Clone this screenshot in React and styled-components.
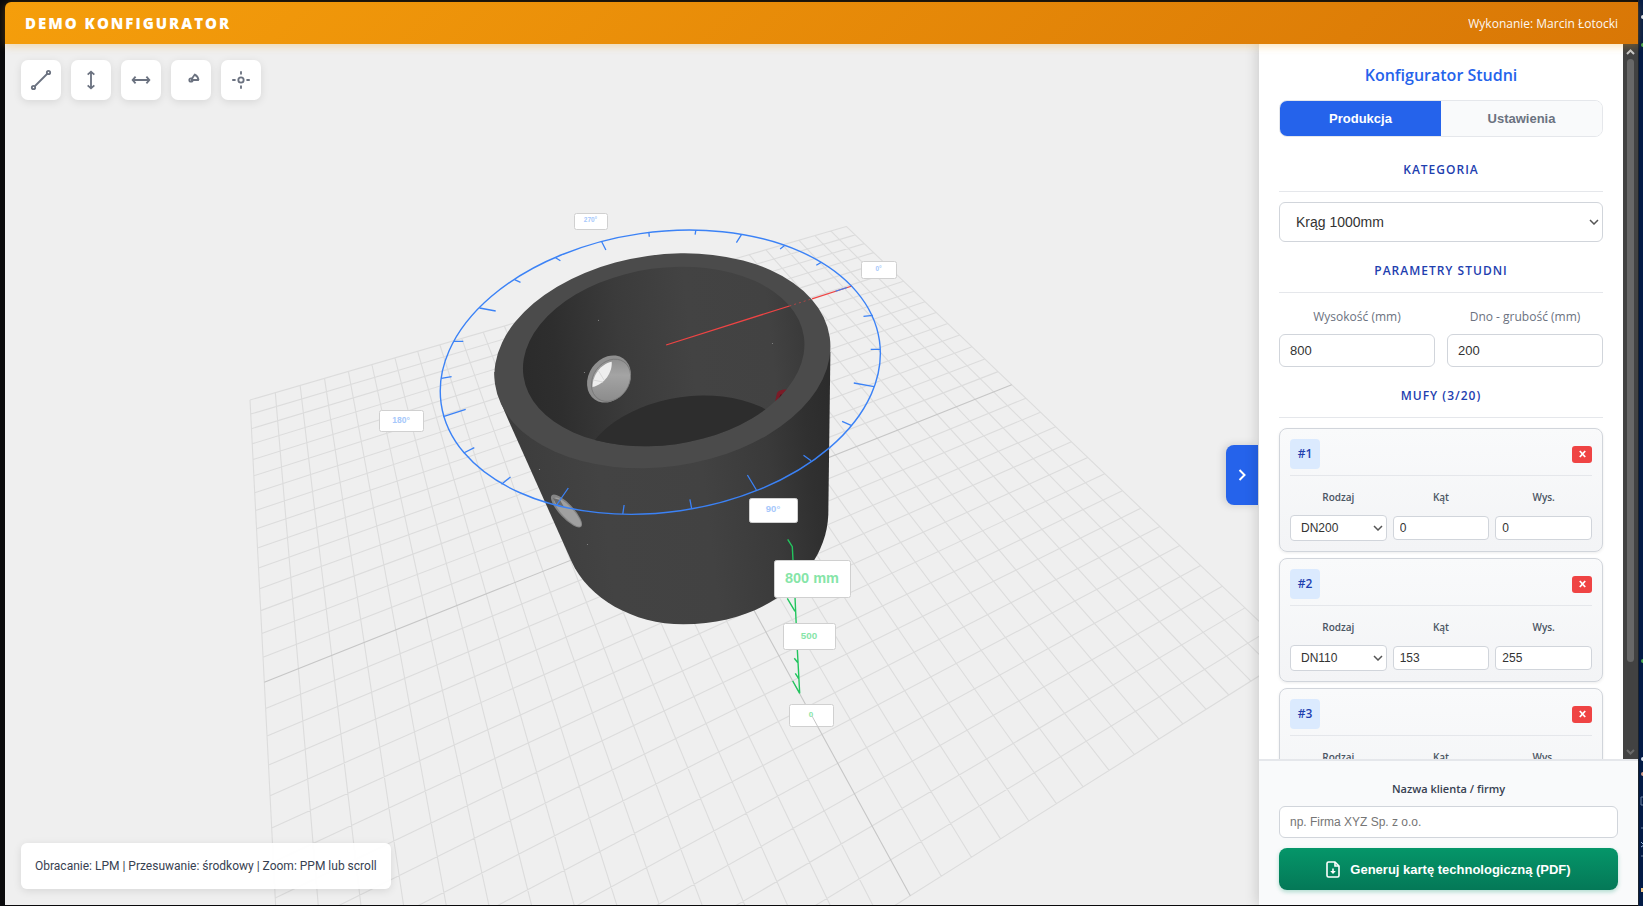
import { useState } from "react";
import styled, { createGlobalStyle, css } from "styled-components";

const GRID_HALF = 15;

// ground plane (grid units) -> screen
const project = (u, v) => {
  const w = 1 + 0.010823 * u - 0.020158 * v;
  return [
    (31.818 * u - 4.241 * v + 698.67) / w,
    (-4.146 * u + 7.702 * v + 509.34) / w,
  ];
};

const segment = (a, b) => `M${a.join(" ")}L${b.join(" ")}`;

const gridLines = [];
for (let i = -GRID_HALF; i <= GRID_HALF; i++) {
  if (i === 0) continue;
  gridLines.push(segment(project(i, -GRID_HALF), project(i, GRID_HALF)));
  gridLines.push(segment(project(-GRID_HALF, i), project(GRID_HALF, i)));
}

const axisLines = [
  segment(project(0, -GRID_HALF), project(0, GRID_HALF)),
  segment(project(-GRID_HALF, 0), project(GRID_HALF, 0)),
];

const ringTicks = [
  [872.8, 315.3, 863.5, 316.3],
  [880.3, 349.3, 870.7, 349.3],
  [874.1, 386.7, 853.8, 383],
  [851.1, 425.3, 842.1, 421.3],
  [811.1, 460.7, 803.5, 455.3],
  [756.4, 490, 747.4, 475],
  [691.6, 508.3, 689.9, 499.3],
  [622.8, 514, 624.1, 505],
  [556.6, 505, 568.3, 488],
  [501.5, 484.3, 510.5, 477],
  [463.7, 453, 474.3, 447.7],
  [443.3, 416.7, 465.7, 409.3],
  [441.3, 378.3, 451.6, 376.7],
  [454, 341.3, 463.3, 341.3],
  [479.5, 308, 495.7, 311],
  [514.6, 279.7, 520.5, 282.3],
  [555.6, 257.7, 560.4, 260.7],
  [601.7, 241.7, 605.9, 250],
  [648.9, 232.7, 649.3, 236.7],
  [695.8, 230.3, 695.1, 234.7],
  [741.6, 234.3, 736.4, 242.7],
  [784.3, 245.7, 780.1, 249],
  [821.4, 262.3, 816.3, 265.3],
];

const angleTags = [
  { text: "270°", x: 574, y: 213, w: 33, h: 16, size: 6.5 },
  { text: "0°", x: 861, y: 261, w: 35, h: 17, size: 6.5 },
  { text: "180°", x: 379, y: 410, w: 44, h: 21, size: 8.5 },
  { text: "90°", x: 749, y: 498, w: 48, h: 24, size: 9.5 },
];

const heightTags = [
  { text: "800 mm", x: 774, y: 560, w: 76, h: 37, size: 14.5 },
  { text: "500", x: 783, y: 623, w: 52, h: 26, size: 9.8 },
  { text: "0", x: 789, y: 704, w: 44, h: 22, size: 8 },
];

const Tag = ({ text, x, y, w, h, size, color }) => (
  <g>
    <rect x={x + 0.5} y={y + 0.5} width={w} height={h} rx="2" fill="#fff" stroke="#d0d0d0" />
    <text
      x={x + w / 2}
      y={y + h / 2 - 1 + size * 0.36}
      fontSize={size}
      fontWeight="700"
      textAnchor="middle"
      fill={color}
    >
      {text}
    </text>
  </g>
);

const Scene = () => (
  <Canvas viewBox="5 44 1254 861" preserveAspectRatio="xMidYMid slice">
    <defs>
      <linearGradient id="wall" gradientUnits="userSpaceOnUse" x1="494" y1="440" x2="830" y2="400">
        <stop offset="0" stopColor="#3b3b3b" />
        <stop offset="0.3" stopColor="#434343" />
        <stop offset="0.6" stopColor="#424242" />
        <stop offset="0.8" stopColor="#3a3a3a" />
        <stop offset="0.92" stopColor="#303030" />
        <stop offset="1" stopColor="#2c2c2c" />
      </linearGradient>
      <linearGradient id="inside" gradientUnits="userSpaceOnUse" x1="523" y1="370" x2="805" y2="340">
        <stop offset="0" stopColor="#2b2b2b" />
        <stop offset="0.12" stopColor="#2e2e2e" />
        <stop offset="0.35" stopColor="#3b3b3b" />
        <stop offset="0.6" stopColor="#434343" />
        <stop offset="0.88" stopColor="#424242" />
        <stop offset="1" stopColor="#3a3a3a" />
      </linearGradient>
      <linearGradient id="bore" gradientUnits="userSpaceOnUse" x1="594" y1="392" x2="630" y2="368">
        <stop offset="0" stopColor="#8c8c8c" />
        <stop offset="0.6" stopColor="#a4a4a4" />
        <stop offset="1" stopColor="#8e8e8e" />
      </linearGradient>
      <clipPath id="opening">
        <ellipse cx="663.7" cy="356.5" rx="141.6" ry="88.5" transform="rotate(-8 663.7 356.5)" />
      </clipPath>
    </defs>

    <path d={gridLines.join("")} stroke="#dcdcdc" strokeWidth="1.1" fill="none" />
    <path d={axisLines.join("")} stroke="#c6c6c6" strokeWidth="1.1" fill="none" />

    <path
      d="M494.3 372C495 388 500 401 508.3 420L571.7 561.7C588 598 633 624.3 683.3 624.3C768 624.3 826 572 828.3 515L830.4 352Z"
      fill="url(#wall)"
    />
    <ellipse cx="662.4" cy="360.8" rx="169" ry="105.9" transform="rotate(-8 662.4 360.8)" fill="#4b4b4b" />
    <g clipPath="url(#opening)">
      <rect x="520" y="260" width="290" height="200" fill="url(#inside)" />
      <ellipse cx="690" cy="465" rx="109" ry="68.5" transform="rotate(-8 690 465)" fill="#2d2d2d" />
      <path d="M775 402L777 393Q779 389 787 389.5L784 394L782 402Z" fill="#7c1b27" />
      <path d="M778 400L781 394L783 397Z" fill="#3d1016" />
    </g>
    <g>
      <ellipse cx="609" cy="379" rx="25" ry="20.3" transform="rotate(-55 609 379)" fill="#8f8f8f" />
      <ellipse
        cx="611"
        cy="380.3"
        rx="22.5"
        ry="18"
        transform="rotate(-55 611 380.3)"
        fill="url(#bore)"
        stroke="#777"
        strokeWidth="0.8"
      />
      <path d="M592.5 387C592.5 376 600 364 611.7 361.7C612.5 372 605 384 592.5 387Z" fill="#eeeeee" />
      <path d="M593 380L603 382M598 370L604 380" stroke="#dadada" fill="none" />
    </g>
    <ellipse cx="566.5" cy="511" rx="21.5" ry="7" transform="rotate(47 566.5 511)" fill="#858585" />
    <ellipse cx="567.5" cy="512" rx="19" ry="5.5" transform="rotate(47 567.5 512)" fill="#a0a0a0" />
    <path d="M553 498L560 500L564 507L556 504Z" fill="#6a6a6a" />
    <g fill="#8a8a8a">
      <circle cx="598.5" cy="320.3" r="0.6" />
      <circle cx="584.5" cy="372.5" r="0.6" />
      <circle cx="772.5" cy="343.5" r="0.6" />
      <circle cx="539.5" cy="469.5" r="0.6" />
      <circle cx="587.5" cy="544.5" r="0.6" />
    </g>

    <path d="M666.1 345L789.4 306M812 298.8L852 286" stroke="#ef4444" strokeWidth="1.3" />
    <path d="M789.4 306L812 298.8" stroke="#ef4444" strokeDasharray="2 3" opacity="0.6" />
    <path d="M835.5 291.2L847 287.5" stroke="#3b82f6" strokeWidth="1.2" />
    <ellipse
      cx="660.3"
      cy="372.2"
      rx="221.4"
      ry="140"
      transform="rotate(-8.2 660.3 372.2)"
      fill="none"
      stroke="#3b82f6"
      strokeWidth="1.4"
    />
    <path
      d={ringTicks.map(([x1, y1, x2, y2]) => `M${x1} ${y1}L${x2} ${y2}`).join("")}
      stroke="#3b82f6"
      strokeWidth="1.3"
    />

    <path
      d="M787.7 539.3L792.3 546.7L793 560L795 597L797.3 649L799.7 693.3L792.7 681M787.3 598.3L795 611.3M794.3 658.3L798.3 663.3M795.3 673.3L799 679"
      stroke="#22c55e"
      strokeWidth="1.4"
      fill="none"
    />
    {angleTags.map((tag) => (
      <Tag key={tag.text} {...tag} color="#a6c8fb" />
    ))}
    {heightTags.map((tag) => (
      <Tag key={tag.text} {...tag} color="#86e5a8" />
    ))}
    <path d="M812 716L818 727" stroke="#c6c6c6" />
  </Canvas>
);

const tools = [
  {
    name: "Odległość",
    icon: (
      <>
        <circle cx="3" cy="21" r="2" />
        <circle cx="21" cy="3" r="2" />
        <path d="M4.5 19.5L19.5 4.5" />
      </>
    ),
  },
  { name: "Wymiar pionowy", icon: <path d="M12 2v20M8 5.5L12 2l4 3.5M8 18.5l4 3.5 4-3.5" /> },
  { name: "Wymiar poziomy", icon: <path d="M2 12h20M5.5 8L2 12l3.5 4M18.5 8l3.5 4-3.5 4" /> },
  {
    name: "Kąt",
    icon: (
      <>
        <circle cx="12" cy="12" r="2" />
        <path d="M12 12h9.5M13 10.5L16.5 5.5A8 8 0 0 1 21 12" />
      </>
    ),
  },
  {
    name: "Środek",
    icon: (
      <>
        <circle cx="12" cy="12" r="3.2" />
        <path d="M12 1.5v4M12 18.5v4M1.5 12h4M18.5 12h4" />
      </>
    ),
  },
];

const initialSleeves = [
  { type: "DN200", angle: 0, height: 0 },
  { type: "DN110", angle: 153, height: 255 },
  { type: "DN160", angle: 270, height: 300 },
];

function App() {
  const [tab, setTab] = useState("Produkcja");
  const [sleeves, setSleeves] = useState(initialSleeves);

  const removeSleeve = (index) => {
    setSleeves(sleeves.filter((_, i) => i !== index));
  };

  return (
    <Desktop>
      <GlobalStyle />
      <Window>
        <Header>
          <Brand>DEMO KONFIGURATOR</Brand>
          <Author>Wykonanie: Marcin Łotocki</Author>
        </Header>
        <Main>
          <Viewport>
            <Scene />
            <Toolbar>
              {tools.map((tool) => (
                <ToolButton key={tool.name} type="button" aria-label={tool.name}>
                  <svg
                    width="20"
                    height="20"
                    viewBox="0 0 24 24"
                    fill="none"
                    stroke="currentColor"
                    strokeWidth="2.2"
                    overflow="visible"
                  >
                    {tool.icon}
                  </svg>
                </ToolButton>
              ))}
            </Toolbar>
            <Hint>Obracanie: LPM | Przesuwanie: środkowy | Zoom: PPM lub scroll</Hint>
            <PanelToggle type="button" aria-label="Zwiń panel">
              <svg width="8" height="12" viewBox="0 0 8 12" fill="none" stroke="currentColor" strokeWidth="2">
                <path d="M1.5 1L6.5 6L1.5 11" />
              </svg>
            </PanelToggle>
          </Viewport>

          <Sidebar>
            <ScrollArea>
              <Content>
                <Title>Konfigurator Studni</Title>
                <Tabs>
                  {["Produkcja", "Ustawienia"].map((name) => (
                    <Tab key={name} type="button" $active={tab === name} onClick={() => setTab(name)}>
                      {name}
                    </Tab>
                  ))}
                </Tabs>

                <SectionTitle id="category">Kategoria</SectionTitle>
                <CategorySelect aria-labelledby="category" defaultValue="Krąg 1000mm">
                  <option>Krąg 1000mm</option>
                  <option>Krąg 1200mm</option>
                  <option>Krąg 1500mm</option>
                </CategorySelect>

                <SectionTitle>Parametry studni</SectionTitle>
                <Params>
                  <Field>
                    <FieldLabel htmlFor="height">Wysokość (mm)</FieldLabel>
                    <TextInput id="height" defaultValue="800" />
                  </Field>
                  <Field>
                    <FieldLabel htmlFor="bottom">Dno - grubość (mm)</FieldLabel>
                    <TextInput id="bottom" defaultValue="200" />
                  </Field>
                </Params>

                <SectionTitle>Mufy ({sleeves.length}/20)</SectionTitle>
                <Cards>
                  {sleeves.map((sleeve, i) => (
                    <Card key={sleeve.type}>
                      <CardHead>
                        <Badge>#{i + 1}</Badge>
                        <RemoveButton type="button" aria-label="Usuń mufę" onClick={() => removeSleeve(i)}>
                          <svg width="7" height="8" viewBox="0 0 7 8" stroke="currentColor" strokeWidth="1.8">
                            <path d="M0.8 1L6.2 7M6.2 1L0.8 7" />
                          </svg>
                        </RemoveButton>
                      </CardHead>
                      <CardGrid>
                        <CardLabel htmlFor={`type-${i}`}>Rodzaj</CardLabel>
                        <CardLabel htmlFor={`angle-${i}`}>Kąt</CardLabel>
                        <CardLabel htmlFor={`level-${i}`}>Wys.</CardLabel>
                        <CardSelect id={`type-${i}`} defaultValue={sleeve.type}>
                          <option>DN110</option>
                          <option>DN160</option>
                          <option>DN200</option>
                        </CardSelect>
                        <CardInput id={`angle-${i}`} defaultValue={sleeve.angle} />
                        <CardInput id={`level-${i}`} defaultValue={sleeve.height} />
                      </CardGrid>
                    </Card>
                  ))}
                </Cards>
              </Content>
              <ScrollTrack>
                <ScrollArrow>
                  <svg width="9" height="6" viewBox="0 0 9 6" fill="none" stroke="#c8c8c8" strokeWidth="2">
                    <path d="M1 5L4.5 1.5L8 5" />
                  </svg>
                </ScrollArrow>
                <ScrollRail>
                  <ScrollThumb />
                </ScrollRail>
                <ScrollArrow>
                  <svg width="9" height="6" viewBox="0 0 9 6" fill="none" stroke="#6b6b6b" strokeWidth="2">
                    <path d="M1 1L4.5 4.5L8 1" />
                  </svg>
                </ScrollArrow>
              </ScrollTrack>
            </ScrollArea>

            <Footer>
              <ClientLabel htmlFor="client">Nazwa klienta / firmy</ClientLabel>
              <ClientInput id="client" placeholder="np. Firma XYZ Sp. z o.o." />
              <GenerateButton type="button">
                <svg width="14" height="17" viewBox="0 0 14 17" fill="none" stroke="currentColor" strokeWidth="1.6">
                  <path d="M9 1H2.5Q1 1 1 2.5V14.5Q1 16 2.5 16H11.5Q13 16 13 14.5V5Z" strokeLinejoin="round" />
                  <path d="M9 1V5H13" />
                  <path d="M7 7.5V11" />
                  <path d="M4.2 10H9.8L7 13Z" fill="currentColor" stroke="none" />
                </svg>
                Generuj kartę technologiczną (PDF)
              </GenerateButton>
            </Footer>
          </Sidebar>
        </Main>
      </Window>
      <Backdrop>
        <svg width="5" height="906" viewBox="0 0 5 906" aria-hidden="true">
          <circle cx="4" cy="17" r="2" fill="#dfe6f2" />
          <circle cx="4" cy="45" r="2" fill="#4caf50" />
          <circle cx="4" cy="661" r="2" fill="#4caf50" />
          <circle cx="4" cy="759" r="2" fill="#dfe6f2" />
          <circle cx="4" cy="774" r="2" fill="#d9a08c" />
          <path d="M5 797H2V805H5M2 828H5M2 856H5" stroke="#6f86a8" fill="none" />
          <path d="M2 842L5 845L2 847" stroke="#9fc0e8" fill="none" />
          <rect x="2" y="888" width="3" height="4" fill="#f3c98b" />
        </svg>
      </Backdrop>
    </Desktop>
  );
}

export default App;

const GlobalStyle = createGlobalStyle`
  * {
    box-sizing: border-box;
  }
  body {
    margin: 0;
    background: #0a0a0c;
    color: #374151;
    font-family: "Open Sans", "Noto Sans", sans-serif;
  }
  button,
  input,
  select {
    font-family: "Liberation Sans", Arial, sans-serif;
    margin: 0;
  }
`;

const Desktop = styled.div`
  display: flex;
  height: 100vh;
`;

const Window = styled.div`
  flex: 1;
  min-width: 0;
  display: flex;
  flex-direction: column;
  padding: 2px 0 1px 5px;
`;

const Backdrop = styled.div`
  width: 5px;
  overflow: hidden;
  background: #041c48;
  border-left: 1px solid #1c2430;
`;

const Header = styled.header`
  display: flex;
  align-items: center;
  justify-content: space-between;
  height: 42px;
  padding: 0 20px;
  color: #fff;
  background: linear-gradient(135deg, #f59e0b, #d97706);
  border-top-left-radius: 6px;
  box-shadow: 0 2px 8px rgba(245, 158, 11, 0.3);
  position: relative;
  z-index: 5;
`;

const Brand = styled.h1`
  margin: 0;
  font-size: 15px;
  font-weight: 800;
  letter-spacing: 2px;
`;

const Author = styled.span`
  font-size: 12px;
  font-weight: 500;
  opacity: 0.95;
`;

const Main = styled.main`
  flex: 1;
  min-height: 0;
  display: flex;
`;

const Viewport = styled.section`
  position: relative;
  flex: 1;
  min-width: 0;
  display: flex;
  flex-direction: column;
  align-items: flex-start;
  justify-content: space-between;
  padding: 16px;
  background: #efefef;
`;

const Canvas = styled.svg`
  position: absolute;
  inset: 0;
  width: 100%;
  height: 100%;
  font-family: "Liberation Sans", Arial, sans-serif;
`;

const Toolbar = styled.div`
  position: relative;
  display: flex;
  gap: 10px;
`;

const ToolButton = styled.button`
  display: flex;
  align-items: center;
  justify-content: center;
  width: 40px;
  height: 40px;
  padding: 0;
  color: #6b7280;
  background: #fff;
  border: 0;
  border-radius: 7px;
  box-shadow: 0 2px 8px rgba(0, 0, 0, 0.1);
`;

const Hint = styled.div`
  position: relative;
  padding: 14px;
  font-family: Roboto, "Open Sans", sans-serif;
  font-size: 12px;
  line-height: 18px;
  color: #374151;
  background: rgba(255, 255, 255, 0.95);
  border-radius: 6px;
  box-shadow: 0 2px 8px rgba(0, 0, 0, 0.1);
`;

const PanelToggle = styled.button`
  position: absolute;
  top: calc(50% - 30px);
  right: 1px;
  display: flex;
  align-items: center;
  justify-content: center;
  width: 32px;
  height: 60px;
  padding: 0;
  color: #fff;
  background: #2563eb;
  border: 0;
  border-radius: 8px 0 0 8px;
  box-shadow: -2px 0 8px rgba(0, 0, 0, 0.15);
`;

const Sidebar = styled.aside`
  width: 379px;
  display: flex;
  flex-direction: column;
  background: #fff;
  box-shadow: -2px 0 12px rgba(0, 0, 0, 0.15);
  position: relative;
`;

const ScrollArea = styled.div`
  flex: 1;
  min-height: 0;
  display: flex;
`;

const Content = styled.div`
  flex: 1;
  overflow: hidden;
  padding: 20px;
`;

const ScrollTrack = styled.div`
  width: 15px;
  display: flex;
  flex-direction: column;
  background: #424242;
`;

const ScrollArrow = styled.div`
  display: flex;
  align-items: center;
  justify-content: center;
  height: 15px;
`;

const ScrollRail = styled.div`
  flex: 1;
  padding: 0 4px;
`;

const ScrollThumb = styled.div`
  height: 88%;
  background: #686868;
  border-radius: 4px;
`;

const Title = styled.h2`
  margin: 0 0 14px;
  font-size: 16px;
  font-weight: 600;
  line-height: 22px;
  text-align: center;
  color: #2563eb;
`;

const Tabs = styled.div`
  display: flex;
  height: 37px;
  margin-bottom: 24px;
  overflow: hidden;
  border: 1px solid #e5e7eb;
  border-radius: 8px;
`;

const Tab = styled.button`
  flex: 1;
  border: 0;
  font-size: 13px;
  font-weight: 700;
  color: #6b7280;
  background: #f9fafb;
  ${(props) =>
    props.$active &&
    css`
      color: #fff;
      background: #2563eb;
    `}
`;

const SectionTitle = styled.h3`
  margin: 20px 0 10px;
  padding-bottom: 12px;
  font-size: 12px;
  font-weight: 600;
  line-height: 18px;
  letter-spacing: 1px;
  text-align: center;
  text-transform: uppercase;
  color: #1e40af;
  border-bottom: 1px solid #e5e7eb;
`;

const control = css`
  width: 100%;
  min-width: 0;
  color: #333;
  background-color: #fff;
  border: 1px solid #d1d5db;
`;

const chevron = css`
  appearance: none;
  background-image: url("data:image/svg+xml,%3Csvg xmlns='http://www.w3.org/2000/svg' width='10' height='6' viewBox='0 0 10 6' fill='none' stroke='%23555' stroke-width='1.5'%3E%3Cpath d='M1 1l4 4 4-4'/%3E%3C/svg%3E");
  background-repeat: no-repeat;
  background-position: right 3px center;
`;

const CategorySelect = styled.select`
  ${control}
  ${chevron}
  height: 40px;
  padding: 0 16px;
  font-size: 14px;
  border-radius: 6px;
`;

const Params = styled.div`
  display: grid;
  grid-template-columns: 1fr 1fr;
  gap: 12px;
`;

const Field = styled.div`
  display: flex;
  flex-direction: column;
`;

const FieldLabel = styled.label`
  padding: 5px 0 8px;
  font-size: 12px;
  line-height: 18px;
  text-align: center;
  color: #6b7280;
`;

const TextInput = styled.input`
  ${control}
  height: 33px;
  padding: 0 10px;
  font-size: 13px;
  border-radius: 6px;
`;

const Cards = styled.div`
  display: flex;
  flex-direction: column;
  gap: 6px;
`;

const Card = styled.div`
  padding: 10px;
  background: linear-gradient(180deg, #f9fafb, #f3f4f6);
  border: 1px solid #d1d5db;
  border-radius: 8px;
  box-shadow: 0 1px 3px rgba(0, 0, 0, 0.08);
`;

const CardHead = styled.div`
  display: flex;
  align-items: center;
  justify-content: space-between;
  padding-bottom: 6px;
  border-bottom: 1px solid #e5e7eb;
`;

const Badge = styled.span`
  width: 30px;
  font-size: 12px;
  font-weight: 600;
  line-height: 30px;
  text-align: center;
  color: #1e40af;
  background: #dbeafe;
  border-radius: 4px;
`;

const RemoveButton = styled.button`
  display: flex;
  align-items: center;
  justify-content: center;
  width: 20px;
  height: 17px;
  padding: 0;
  color: #fff;
  background: #ef4444;
  border: 0;
  border-radius: 3px;
`;

const CardGrid = styled.div`
  display: grid;
  grid-template-columns: repeat(3, 1fr);
  align-items: center;
  column-gap: 6px;
  row-gap: 11px;
  padding-top: 14px;
`;

const CardLabel = styled.label`
  font-size: 10px;
  font-weight: 600;
  line-height: 14px;
  text-align: center;
  color: #4b5563;
`;

const CardSelect = styled.select`
  ${control}
  ${chevron}
  height: 26px;
  padding: 0 10px;
  font-size: 12px;
  border-radius: 4px;
`;

const CardInput = styled.input`
  ${control}
  height: 24px;
  padding: 0 6px;
  font-size: 12px;
  border-radius: 4px;
`;

const Footer = styled.footer`
  display: flex;
  flex-direction: column;
  padding: 18px 20px 15px;
  background: #f9fafb;
  border-top: 2px solid #e5e7eb;
`;

const ClientLabel = styled.label`
  margin-bottom: 7px;
  font-size: 11px;
  font-weight: 600;
  line-height: 20px;
  text-align: center;
`;

const ClientInput = styled.input`
  ${control}
  height: 32px;
  padding: 0 10px;
  font-size: 12px;
  border-radius: 6px;
  &::placeholder {
    color: #757575;
  }
`;

const GenerateButton = styled.button`
  display: flex;
  align-items: center;
  justify-content: center;
  gap: 10px;
  height: 42px;
  margin-top: 10px;
  font-size: 13px;
  font-weight: 700;
  color: #fff;
  background: linear-gradient(180deg, #059669, #047857);
  border: 0;
  border-radius: 8px;
  box-shadow: 0 2px 4px rgba(5, 150, 105, 0.3);
`;
